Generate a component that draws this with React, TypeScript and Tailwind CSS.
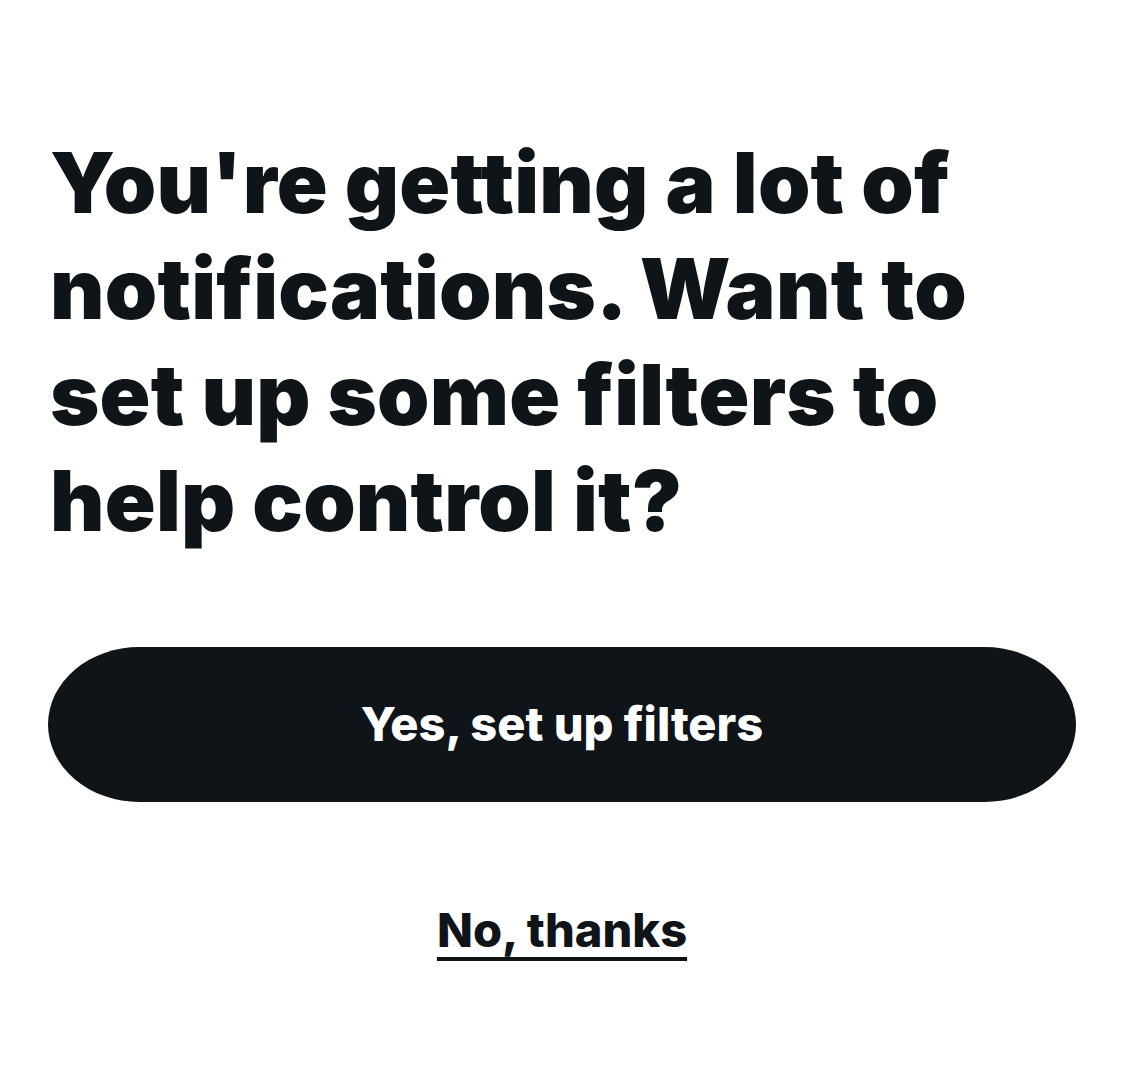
export default function App() {
  return (
    <div className="min-h-screen bg-white text-[#0f1419] font-['Inter','Liberation_Sans',sans-serif]">
      <div className="px-[48px] pt-[130px]">
        {/* Prompt */}
        <h1 className="pl-[2px] text-[84px] leading-[106px] font-black tracking-[0.2px]">
          You're getting a lot of notifications. Want to set up some filters to help control it?
        </h1>

        <button className="mt-[93px] flex h-[155px] w-full items-center justify-center rounded-[92px/78px] bg-[#0f1419] text-[47px] font-extrabold text-white">
          Yes, set up filters
        </button>

        <div className="mt-[100px] flex justify-center">
          <a href="#" className="text-[47px] leading-[56px] font-extrabold underline decoration-[4px] underline-offset-[10px]">
            No, thanks
          </a>
        </div>
      </div>
    </div>
  );
}
